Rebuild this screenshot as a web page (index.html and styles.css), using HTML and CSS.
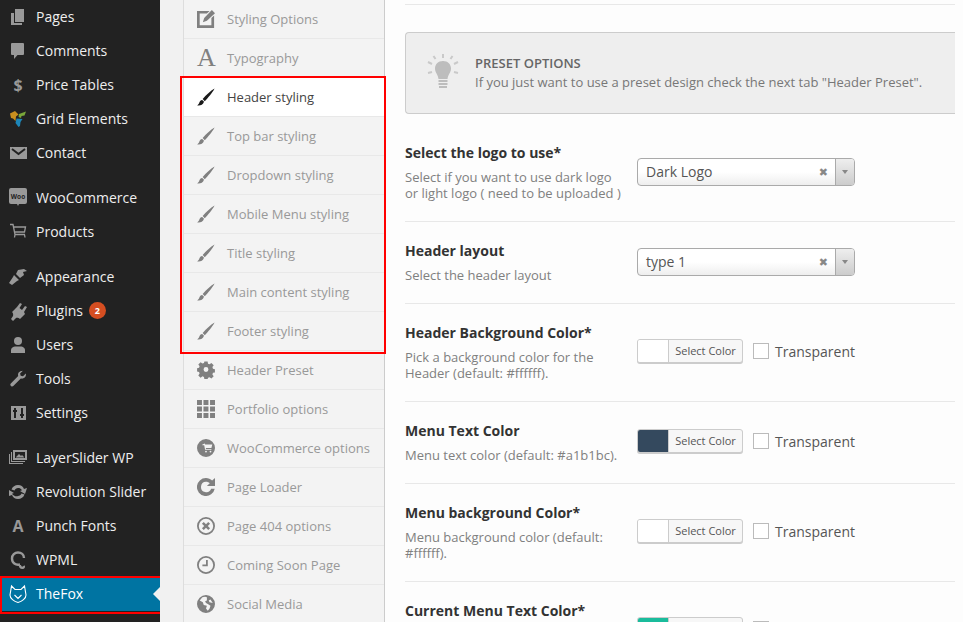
FILE: index.html
```html
<!DOCTYPE html>
<html lang="en">
<head>
  <meta charset="utf-8">
  <title>TheFox Options</title>
  <link rel="stylesheet" href="styles.css">
</head>
<body>
  <svg width="0" height="0" class="defs">
    <symbol id="brush" viewBox="0 0 20 20"><path d="M19.500.5C15 3 10 7.800 6.300 12.300l2.300 2.300C12.200 11 17.200 5.200 19.500.5zM5.800 13.200c-2 .3-3 1.600-3.300 3.300-.2 1-1 2-2.300 2.900 3 .5 6.400-.3 7.600-4z"/></symbol>
  </svg>

  <div class="page">
    <nav class="adminmenu">
      <ul class="menu-group">
        <li class="menu-item"><svg class="menu-icon" viewBox="0 0 20 20"><path d="M7 2h9v13H7zM3 6h3v10h8v2H3z"/></svg>Pages</li>
        <li class="menu-item"><svg class="menu-icon" viewBox="0 0 20 20"><path d="M4 2h11a1 1 0 0 1 1 1v10a1 1 0 0 1-1 1H9.500L6 18v-4H4a1 1 0 0 1-1-1V3a1 1 0 0 1 1-1z"/></svg>Comments</li>
        <li class="menu-item"><span class="menu-glyph">$</span>Price Tables</li>
        <li class="menu-item"><svg class="menu-icon" viewBox="0 0 20 20"><path fill="#c98f1f" d="M2 4.500L7 2l3.500 3.500L8 7.500 7.500 12 5 9.500l-2-.5z"/><path fill="#7aa83a" d="M10.500 8l.5-3 7-2.500-1.500 4-3 .5-.5 2z"/><path fill="#1d86b8" d="M8.500 9.500l6 .5-2 3-.5 4-1.500 1-3-4z"/></svg>Grid Elements</li>
        <li class="menu-item"><svg class="menu-icon" viewBox="0 0 20 20"><path d="M2 4h17v12H2z"/><path fill="none" stroke="#222" stroke-width="2" d="M4 6l6.500 5 6.500-5"/></svg>Contact</li>
      </ul>
      <ul class="menu-group">
        <li class="menu-item"><svg class="menu-icon" viewBox="0 0 20 20"><path d="M3 0h14a2 2 0 0 1 2 2v12a2 2 0 0 1-2 2h-6l-1 2-1-2H3a2 2 0 0 1-2-2V2a2 2 0 0 1 2-2z"/><text x="10" y="10.500" class="woo-mark">Woo</text></svg>WooCommerce</li>
        <li class="menu-item"><svg class="menu-icon stroked" viewBox="0 0 20 20"><path d="M2 2.500h3l2 10h10M5.500 5h12l-1 5H6.500M7 12.500l-.5 3M16.500 12.500l.5 3"/></svg>Products</li>
      </ul>
      <ul class="menu-group">
        <li class="menu-item"><svg class="menu-icon" viewBox="0 0 20 20"><path d="M10 3l6-1 3 2-4 1 1 3-4 3-4-4zM6 8l5 5-2 1-5 4-3-2 4-6z"/></svg>Appearance</li>
        <li class="menu-item"><svg class="menu-icon" viewBox="0 0 20 20"><path d="M12 2l2 1-2.500 4 2.500 2 3-4 2 1-3 5 1 2-5 5c-1-1-3-1.500-4-1l-3 3-2-2 2-3c.5-1.500 0-3-1-4l5-5z"/></svg>Plugins<span class="update-badge">2</span></li>
        <li class="menu-item"><svg class="menu-icon" viewBox="0 0 20 20"><circle cx="10" cy="6" r="4"/><path d="M3 18v-3c0-2 2.500-3.500 4-3.500h6c1.500 0 4 1.500 4 3.500v3z"/></svg>Users</li>
        <li class="menu-item"><svg class="menu-icon" viewBox="0 0 20 20"><path d="M14 2c-3 0-4.500 2.500-3.800 5L2.800 14.500c-1.500 1.500 1 4 2.500 2.500l7.500-7.500c2.500.7 5.200-1 5.200-4l-.2-1-2.800 2.800-2.300-.6-.6-2.300 2.800-2.600z"/></svg>Tools</li>
        <li class="menu-item"><svg class="menu-icon" viewBox="0 0 20 20"><path fill-rule="evenodd" d="M3 3h15v14H3zM6 5v2H5v2h1v6h2V9h1V7H8V5zM13 5v6h-1v2h1v2h2v-2h1v-2h-1V5z"/></svg>Settings</li>
      </ul>
      <ul class="menu-group">
        <li class="menu-item"><svg class="menu-icon" viewBox="0 0 20 20"><path fill-rule="evenodd" d="M5 2h14v10H5zM7 4v6h10V4zM3 4h1v9h13v1H3zM1 6h1v9h13v1H1z"/><path d="M8 9l3-3 2 2 1-1 2 2v.5H8z"/></svg>LayerSlider WP</li>
        <li class="menu-item"><svg class="menu-icon" viewBox="0 0 20 20"><path d="M10 3c3 0 5 1.600 6 4l3-1-2 6-5-3 2-.7C13 6.500 11.700 6 10 6 8.500 6 7 7 6.500 8.500l-3-1C4.500 4.700 7 3 10 3zM1 8l5 3-2 .7C5 13.500 8.300 15 10 14c1.500 0 3-1 3.500-2.500l3 1C15.500 15.300 13 17 10 17c-3 0-5-1.600-6-4l-3 1z"/></svg>Revolution Slider</li>
        <li class="menu-item"><span class="menu-glyph">A</span>Punch Fonts</li>
        <li class="menu-item"><svg class="menu-icon stroked thick" viewBox="0 0 20 20"><path d="M12 14.500C7.500 15.500 4 13 4 8.500 4 5 6.800 2.500 10 2.500c3.200 0 6 2.200 6 5.500M12 14.500c-.5 1.500.5 3.300 2.500 3.300 1.200 0 1.800-1 1-1.800"/></svg>WPML</li>
        <li class="menu-item current"><svg class="menu-icon fox" viewBox="0 0 20 20"><path d="M3.500 2l3.500 3.500h6L16.500 2l1.500 9c0 3.500-4 6.500-8 7.500-4-1-8-4-8-7.500zM6.500 11l3.500 3.500 3.500-3.500"/></svg>TheFox</li>
      </ul>
    </nav>

    <aside class="tabs">
      <div class="tab"><svg class="tab-icon" viewBox="0 0 20 20"><path d="M0 1h14l-3 3H3v13h13V9l3-3v14H0z"/><path d="M16.500 0L20 3.500 11 12l-4.500 1.500L8 9z"/></svg>Styling Options</div>
      <div class="tab"><span class="tab-glyph">A</span>Typography</div>
      <div class="tab active"><svg class="tab-icon"><use href="#brush"/></svg>Header styling</div>
      <div class="tab"><svg class="tab-icon"><use href="#brush"/></svg>Top bar styling</div>
      <div class="tab"><svg class="tab-icon"><use href="#brush"/></svg>Dropdown styling</div>
      <div class="tab"><svg class="tab-icon"><use href="#brush"/></svg>Mobile Menu styling</div>
      <div class="tab"><svg class="tab-icon"><use href="#brush"/></svg>Title styling</div>
      <div class="tab"><svg class="tab-icon"><use href="#brush"/></svg>Main content styling</div>
      <div class="tab"><svg class="tab-icon"><use href="#brush"/></svg>Footer styling</div>
      <div class="tab"><svg class="tab-icon" viewBox="0 0 20 20"><path fill-rule="evenodd" d="M8 0h4l.5 2.800 1.800.8L16.700 2 19.500 4.800 17.900 7l.7 1.900 2.400.6v4l-2.400.6-.7 1.900 1.600 2.200-2.800 2.800-2.400-1.600-1.800.8-.5 1.800H8l-.5-2.800-1.800-.8-2.400 1.600L.5 17.200 2.100 15l-.7-1.900L-1 12.500v-4l2.400-.6.700-1.900L.5 3.800 3.300 1l2.400 1.600 1.800-.8zM10 7a3 3 0 1 0 0 6 3 3 0 0 0 0-6z" transform="matrix(.9 0 0 .9 1 .5)"/></svg>Header Preset</div>
      <div class="tab"><svg class="tab-icon" viewBox="0 0 20 20"><path d="M0 0h5.500v5.500H0zM7.200 0h5.500v5.500H7.200zM14.500 0H20v5.500h-5.500zM0 7.200h5.500v5.500H0zM7.200 7.200h5.500v5.500H7.200zM14.500 7.200H20v5.500h-5.500zM0 14.500h5.500V20H0zM7.200 14.500h5.500V20H7.200zM14.500 14.500H20V20h-5.500z"/></svg>Portfolio options</div>
      <div class="tab"><svg class="tab-icon" viewBox="0 0 20 20"><path fill-rule="evenodd" d="M10 0a10 10 0 1 1 0 20 10 10 0 0 1 0-20zM6 6v1h2l1 5h7v-1h-6l-.2-1H16l1-4H9l-.3-1zM10 13a1 1 0 1 0 0 2 1 1 0 0 0 0-2zm5 0a1 1 0 1 0 0 2 1 1 0 0 0 0-2z"/></svg>WooCommerce options</div>
      <div class="tab"><svg class="tab-icon" viewBox="0 0 20 20"><path d="M10 0c2.600 0 5 1 6.800 2.700L20 0v9h-9l3.200-3.100C13 4.800 11.600 4.200 10 4.200A5.800 5.800 0 1 0 15.700 12h4A10 10 0 1 1 10 0z"/></svg>Page Loader</div>
      <div class="tab"><svg class="tab-icon" viewBox="0 0 20 20"><path fill-rule="evenodd" d="M10 0a10 10 0 1 1 0 20 10 10 0 0 1 0-20zm0 2a8 8 0 1 0 0 16 8 8 0 0 0 0-16zM7.500 5.500L10 8l2.500-2.500 2 2L12 10l2.500 2.500-2 2L10 12l-2.500 2.500-2-2L8 10 5.500 7.500z"/></svg>Page 404 options</div>
      <div class="tab"><svg class="tab-icon" viewBox="0 0 20 20"><path fill-rule="evenodd" d="M10 0a10 10 0 1 1 0 20 10 10 0 0 1 0-20zm0 2a8 8 0 1 0 0 16 8 8 0 0 0 0-16zM10 4.500h2v7H6v-2h4z"/></svg>Coming Soon Page</div>
      <div class="tab"><svg class="tab-icon" viewBox="0 0 20 20"><path fill-rule="evenodd" d="M10 0a10 10 0 1 1 0 20 10 10 0 0 1 0-20zM6 2.500L3 6l3.500 2 1 3 3.500 1-1 3 2 2.500 2-2.500 1-3-3-2-2-1-1-2 2-1V2.500L9 2zM15 5l-2 1 1 2 3.500 1z"/></svg>Social Media</div>
    </aside>

    <main class="content">
      <div class="top-rule"></div>
      <div class="notice">
        <svg class="notice-icon" viewBox="0 0 32 36"><path fill="#bdbdbd" d="M16 8c5 0 8 3.500 8 7.500 0 4-3 6-3.500 10.500h-9C11 21.500 8 19.500 8 15.500 8 11.500 11 8 16 8zM11.500 27h9v2h-9zM11.500 30h9v2h-9zM12 33h8v2h-8z"/><path stroke="#c9c9c9" stroke-width="2" d="M16 1v4M6.500 3l2 3M25.500 3l-2 3M1 9l4 2M31 9l-4 2M1 20l4-1M31 20l-4-1"/></svg>
        <div class="notice-text">
          <h4 class="notice-title">PRESET OPTIONS</h4>
          <p class="notice-desc">If you just want to use a preset design check the next tab "Header Preset".</p>
        </div>
      </div>

      <section class="field">
        <div class="field-info">
          <h4 class="field-title">Select the logo to use*</h4>
          <p class="field-desc">Select if you want to use dark logo<br>or light logo ( need to be uploaded )</p>
        </div>
        <div class="select"><span class="select-value">Dark Logo</span><span class="select-clear">&#10006;</span><span class="select-arrow"></span></div>
      </section>

      <section class="field">
        <div class="field-info">
          <h4 class="field-title">Header layout</h4>
          <p class="field-desc">Select the header layout</p>
        </div>
        <div class="select"><span class="select-value">type 1</span><span class="select-clear">&#10006;</span><span class="select-arrow"></span></div>
      </section>

      <section class="field">
        <div class="field-info">
          <h4 class="field-title">Header Background Color*</h4>
          <p class="field-desc">Pick a background color for the<br>Header (default: #ffffff).</p>
        </div>
        <div class="color-control">
          <div class="color-btn"><span class="swatch"></span><span class="color-label">Select Color</span></div>
          <span class="check"></span><span class="check-label">Transparent</span>
        </div>
      </section>

      <section class="field">
        <div class="field-info">
          <h4 class="field-title">Menu Text Color</h4>
          <p class="field-desc">Menu text color (default: #a1b1bc).</p>
        </div>
        <div class="color-control">
          <div class="color-btn"><span class="swatch navy"></span><span class="color-label">Select Color</span></div>
          <span class="check"></span><span class="check-label">Transparent</span>
        </div>
      </section>

      <section class="field">
        <div class="field-info">
          <h4 class="field-title">Menu background Color*</h4>
          <p class="field-desc">Menu background color (default:<br>#ffffff).</p>
        </div>
        <div class="color-control">
          <div class="color-btn"><span class="swatch"></span><span class="color-label">Select Color</span></div>
          <span class="check"></span><span class="check-label">Transparent</span>
        </div>
      </section>

      <section class="field">
        <div class="field-info tall">
          <h4 class="field-title">Current Menu Text Color*</h4>
        </div>
        <div class="color-control">
          <div class="color-btn"><span class="swatch green"></span><span class="color-label">Select Color</span></div>
          <span class="check"></span><span class="check-label">Transparent</span>
        </div>
      </section>
    </main>
  </div>

  <div class="highlight highlight-tabs"></div>
  <div class="highlight highlight-menu"></div>
</body>
</html>
```

FILE: styles.css
```css
html, body {
  margin: 0;
  height: 622px;
  overflow: hidden;
}

body {
  position: relative;
  background: #f1f1f1;
  font-family: "Open Sans", sans-serif;
  font-size: 13px;
  color: #777;
}

.defs {
  position: absolute;
}

ul, h4, p {
  margin: 0;
  padding: 0;
}

.page {
  display: flex;
  height: 622px;
}

/* left admin menu */
.adminmenu {
  width: 160px;
  flex: none;
  background: #222;
}

.menu-group {
  list-style: none;
  margin-bottom: 11px;
}

.menu-item {
  display: flex;
  align-items: center;
  box-sizing: border-box;
  height: 34px;
  padding: 0 0 2px 8px;
  color: #eee;
  font-size: 14px;
}

.menu-icon {
  width: 20px;
  height: 20px;
  margin: 2px 8px 0 0;
  flex: none;
  fill: #999;
}

.menu-icon.stroked {
  fill: none;
  stroke: #999;
  stroke-width: 1.300;
}

.menu-icon.thick {
  stroke-width: 2.400;
}

.menu-icon.fox {
  fill: none;
  stroke: #fff;
  stroke-width: 1.100;
}

.woo-mark {
  fill: #222;
  font-size: 6.500px;
  font-weight: 700;
  text-anchor: middle;
}

.menu-glyph {
  width: 20px;
  margin: 2px 8px 0 0;
  flex: none;
  text-align: center;
  color: #999;
  font-weight: 700;
  font-size: 16px;
  line-height: 20px;
}

.update-badge {
  width: 17px;
  height: 17px;
  margin: 1px 0 0 6px;
  border-radius: 50%;
  background: #d54e21;
  color: #fff;
  font-size: 9px;
  font-weight: 700;
  line-height: 17px;
  text-align: center;
}

.menu-item.current {
  position: relative;
  background: #0074a2;
  color: #fff;
}

.menu-item.current::after {
  content: "";
  position: absolute;
  right: 0;
  top: 10px;
  border: 7px solid transparent;
  border-left: 0;
  border-right-color: #f1f1f1;
}

/* options tabs */
.tabs {
  width: 200px;
  flex: none;
  margin-left: 23px;
  background: #f3f3f3;
  border-left: 1px solid #ddd;
  border-right: 1px solid #ccc;
}

.tab {
  display: flex;
  align-items: center;
  height: 38px;
  padding-left: 13px;
  border-bottom: 1px solid #e8e8e8;
  color: #999;
  font-size: 13px;
}

.tab.active {
  background: #fff;
  color: #444;
}

.tab-icon {
  width: 18px;
  height: 18px;
  margin-right: 12px;
  flex: none;
  fill: #808080;
}

.tab.active .tab-icon {
  fill: #1a1a1a;
}

.tab-glyph {
  width: 18px;
  margin-right: 12px;
  flex: none;
  color: #808080;
  font-family: "Liberation Serif", serif;
  font-size: 26px;
  text-align: center;
}

/* main panel */
.content {
  flex: 1;
  padding: 0 8px 0 20px;
  background: #fdfdfd;
}

.top-rule {
  height: 4px;
  margin-bottom: 27px;
  border-bottom: 1px solid #e8e8e8;
}

.notice {
  display: flex;
  align-items: center;
  height: 80px;
  margin-bottom: 10px;
  padding-left: 21px;
  background: #eee;
  border: 1px solid #ccc;
  border-right: 0;
  border-radius: 4px 0 0 4px;
}

.notice-icon {
  width: 32px;
  height: 36px;
  margin: 0 16px 5px 0;
  flex: none;
}

.notice-title {
  color: #666;
  font-size: 13px;
  font-weight: 600;
  line-height: 19px;
}

.notice-desc {
  color: #777;
  font-size: 13px;
  line-height: 19px;
}

.field {
  display: flex;
  align-items: center;
  padding: 19px 0 20px;
  border-bottom: 1px solid #e8e8e8;
}

.field-info {
  width: 232px;
  flex: none;
}

.field-info.tall {
  min-height: 58px;
}

.field-title {
  color: #333;
  font-size: 14px;
  font-weight: 700;
  line-height: 20px;
  margin-bottom: 6px;
}

.field-desc {
  color: #808080;
  font-size: 13px;
  line-height: 16px;
}

/* select box */
.select {
  display: flex;
  align-items: center;
  box-sizing: border-box;
  width: 218px;
  height: 28px;
  border: 1px solid #aaa;
  border-radius: 4px;
  background: linear-gradient(#fff 50%, #eee);
  color: #555;
  font-size: 14px;
}

.select-value {
  flex: 1;
  padding: 0 0 2px 8px;
}

.select-clear {
  margin-right: 7px;
  color: #888;
  font-family: "DejaVu Sans", sans-serif;
  font-size: 11px;
}

.select-arrow {
  position: relative;
  width: 18px;
  height: 26px;
  border-left: 1px solid #aaa;
  border-radius: 0 3px 3px 0;
  background: linear-gradient(#eee, #ccc);
}

.select-arrow::after {
  content: "";
  position: absolute;
  left: 6px;
  top: 11px;
  border: 3px solid transparent;
  border-bottom: 0;
  border-top: 4px solid #888;
}

/* colour picker */
.color-control {
  display: flex;
  align-items: center;
  margin-bottom: 2px;
}

.color-btn {
  display: flex;
  box-sizing: border-box;
  width: 106px;
  height: 24px;
  border: 1px solid #ccc;
  border-radius: 3px;
  box-shadow: 0 1px 0 #ccc;
  background: #f7f7f7;
  overflow: hidden;
}

.swatch {
  width: 30px;
  background: #fff;
  border-right: 1px solid #ccc;
}

.swatch.navy {
  background: #34495e;
}

.swatch.green {
  background: #1abc9c;
}

.color-label {
  flex: 1;
  color: #555;
  font-size: 11px;
  line-height: 21px;
  text-align: center;
}

.check {
  width: 14px;
  height: 14px;
  margin-left: 10px;
  background: #fff;
  border: 1px solid #bbb;
}

.check-label {
  margin-left: 6px;
  color: #555;
  font-size: 14px;
}

/* red annotation boxes */
.highlight {
  position: absolute;
  border: 2px solid #f00;
  box-sizing: border-box;
}

.highlight-tabs {
  left: 180px;
  top: 76px;
  width: 206px;
  height: 278px;
}

.highlight-menu {
  left: 0;
  top: 576px;
  width: 160px;
  height: 38px;
  border-right: 0;
}
```
